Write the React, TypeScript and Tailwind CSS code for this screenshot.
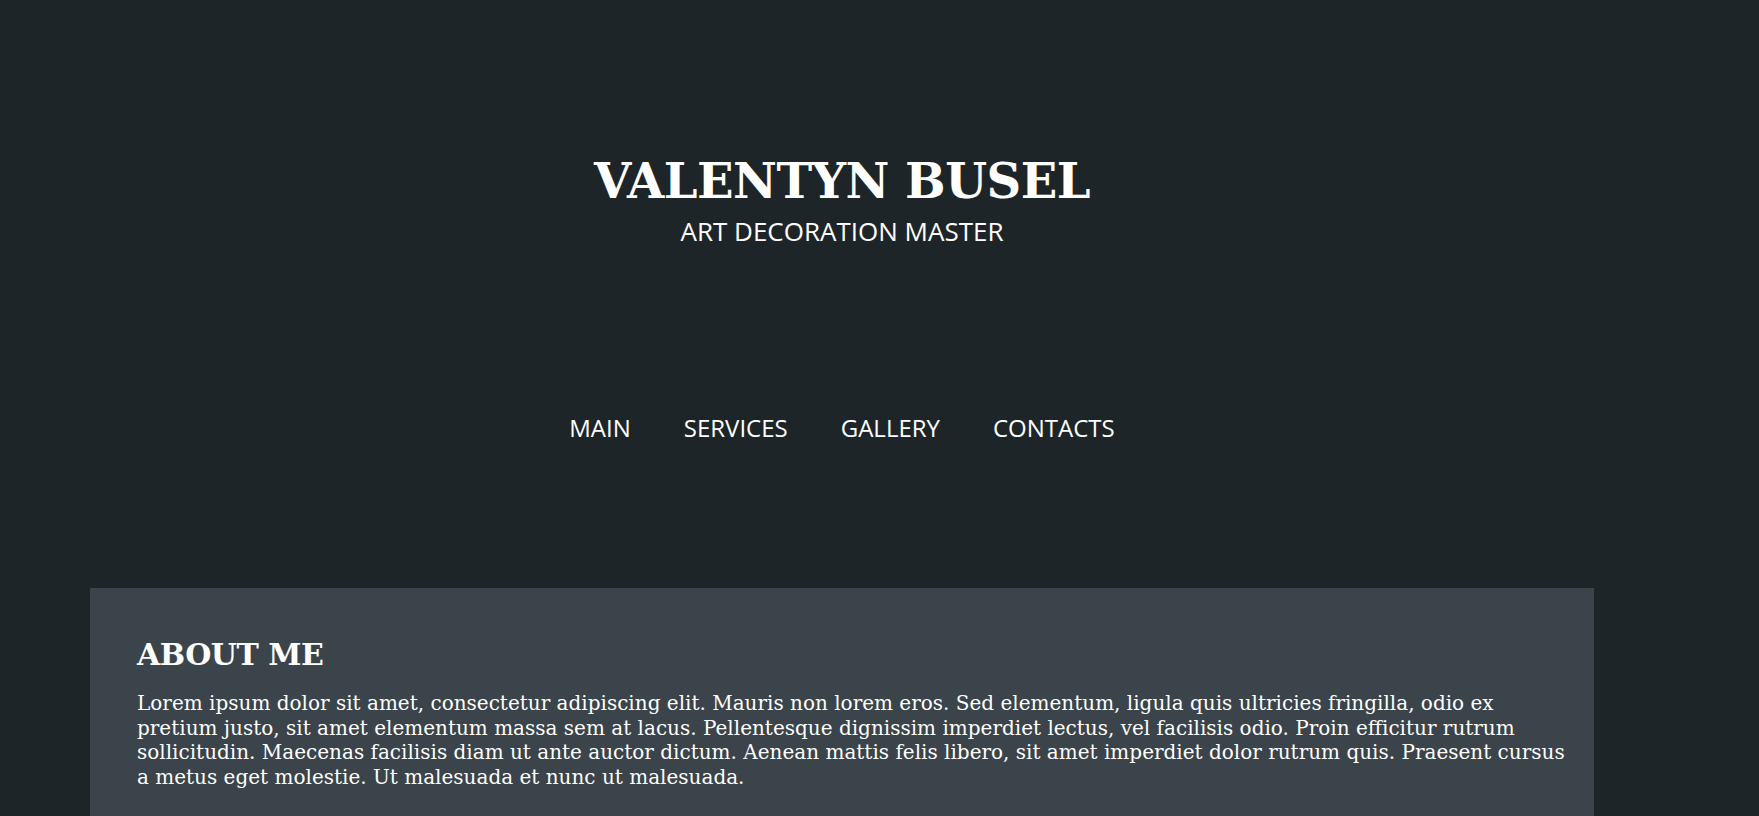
import React from "react";

const serif = "font-['DejaVu_Serif','Liberation_Serif',serif]";
const sans = "font-['Open_Sans','Noto_Sans',sans-serif]";

const links = ["MAIN", "SERVICES", "GALLERY", "CONTACTS"];

export default function App() {
  return (
    <div className="min-h-screen bg-[#1e2528] text-white">
      <div className="w-[1504px] ml-[90px]">
        <header className="pt-[157px] text-center">
          <h1 className={`${serif} text-[48px] font-bold leading-none tracking-[-0.5px]`}>VALENTYN BUSEL</h1>
          <p className={`${sans} mt-[11px] text-[26px] font-medium leading-[1.2]`}>ART DECORATION MASTER</p>
        </header>

        <nav className={`${sans} mt-[167px] flex justify-center gap-[53px] text-[24px] leading-[1.2]`}>
          {links.map((l) => (
            <a key={l} href="#" className="text-white">
              {l}
            </a>
          ))}
        </nav>

        <section className="mt-[145px] bg-[#3a444a] pl-[47px] pr-[27px] pt-[52px] pb-[60px]">
          <h2 className={`${serif} text-[30px] font-bold leading-none tracking-[-0.5px]`}>ABOUT ME</h2>
          <p className={`${serif} mt-[21px] text-[20px] leading-[24.7px]`}>
            Lorem ipsum dolor sit amet, consectetur adipiscing elit. Mauris non lorem eros. Sed elementum, ligula quis
            ultricies fringilla, odio ex pretium justo, sit amet elementum massa sem at lacus. Pellentesque dignissim
            imperdiet lectus, vel facilisis odio. Proin efficitur rutrum sollicitudin. Maecenas facilisis diam ut ante
            auctor dictum. Aenean mattis felis libero, sit amet imperdiet dolor rutrum quis. Praesent cursus a metus eget
            molestie. Ut malesuada et nunc ut malesuada.
          </p>
        </section>
      </div>
    </div>
  );
}
